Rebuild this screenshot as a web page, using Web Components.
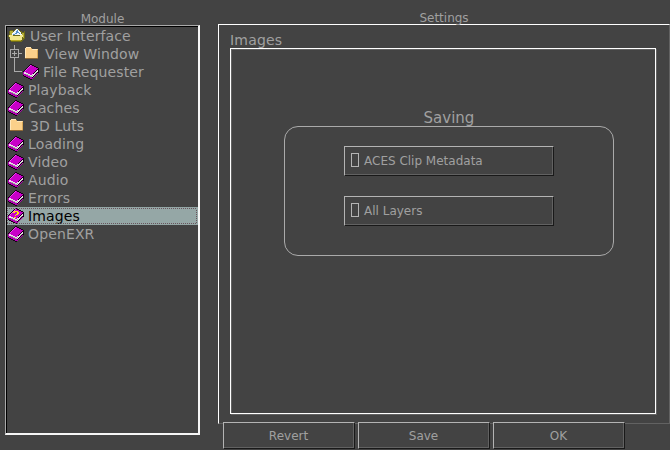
<!DOCTYPE html>
<html lang="en"><head><meta charset="utf-8"><title>Settings</title>
<style>
html,body{margin:0;width:670px;height:450px;overflow:hidden;background:#434343}
</style></head><body>
<prefs-window></prefs-window>
<script>
const define=(name,html,setup)=>customElements.define(name,class extends HTMLElement{
  connectedCallback(){
    if(this.shadowRoot)return;
    this.attachShadow({mode:'open'}).innerHTML=html;
    if(setup)setup(this,this.shadowRoot);
  }
});

const bookArt=`<path d="M7 0h2v1h2v1h2v1h2v1h1v5h-1v1h-1v1h-1v1h-1v1h-1v1h-1v1h-1v1H7v-1H5v-1H3v-1H1v-1H0V7h1V6h1V5h1V4h1V3h1V2h1V1h1z" fill="#160016"/>
<path d="M7 1h2v1h2v1h2v1h2v1h-1v1h-1v1h-1v1h-1v1h-1v1H9v1H7v-1H5V9H3V8H1V7h1V6h1V5h1V4h1V3h1V2h1z" fill="#c800c8"/>
<path d="M1 8h2v1h2v1h2v1h2v-1h2V9h1V8h1V7h1V6h1v2h-1v1h-1v1h-1v1h-1v1h-1v1H9v1H7v-1H5v-1H3v-1H1z" fill="#eadfea"/>
<path d="M3 10h2v1h2v1h2v-1h1v1H9v1H7v-1H5v-1H3zM12 9h1V8h1v1h-1v1h-1z" fill="#aaa"/>
<path d="M0 8h1v2h2v1h2v1h2v1h2v1h1v1H7v-1H5v-1H3v-1H1v-1H0zM10 13h1v-1h1v-1h1v-1h1V9h1v1h-1v1h-1v1h-1v1h-1v1h-1z" fill="#b000b0"/>
<path d="M7 1h1v1H7v1H6v1H5v1H4v1H3v1H2V6h1V5h1V4h1V3h1V2h1z" fill="#ee48ee"/>`;
const art={
 book:bookArt,
 help:bookArt+`<path d="M6 3h4v1h1v2h-1v1H8v1H7V7h1V6h1V4H7v1H5V4h1zM6 9h2v1H6z" fill="#ffe800"/>`,
 folder:`<path d="M2 2h1V1h5v1h1v1h6v10H2z" fill="#fbd08a"/><path d="M2 2h1V1h5v1H3v10H2zM9 3h5v1H9z" fill="#ffe8bb"/><path d="M8 2h1v1H8zM14 4h1v8h-1z" fill="#d8a858"/><path d="M2 12h13v1H2z" fill="#8f6936"/>`,
 open:`<path d="M1 3h1V2h3v1h1V2h1V1h4v1h1v1h2v1h2V3h1v8h-1v1h-1v1h-1v1H3v-1H2v-2H1V9H0V7h1z" fill="#6c6919"/>
 <path d="M2 3h3v1h2v3H2zM14 5h2v5h-1V8h-2V6h1z" fill="#b3ac34"/>
 <path d="M8 1h2v1h1v1h1v1h1v2h1v1H4V5h1V4h1V3h1V2h1z" fill="#eef5fb"/>
 <path d="M8 3h1V2h1v2h1v1H9v1H7V5h1zM11 5h1v1h-1zM5 6h2v1H5z" fill="#5590cc"/>
 <path d="M1 7h4v1h7V7h3v2h-1v3h-1v1H3v-1H2V9H1z" fill="#f2e88e"/>
 <path d="M3 12h10v1H3z" fill="#b9aa20"/>`
};
define('tree-icon',`<style>:host{display:block;width:18px;height:16px;flex:none}svg{display:block}</style><svg width="18" height="16" shape-rendering="crispEdges"></svg>`,
 (h,r)=>{r.querySelector('svg').innerHTML=art[h.getAttribute('kind')]});

define('tree-row',`<style>
:host{display:flex;box-sizing:border-box;height:18px;align-items:center;position:relative;padding-left:var(--indent,1px);font:14px/18px "DejaVu Sans",sans-serif;letter-spacing:.13px;color:#a0a0a0;white-space:pre}
:host([selected]){background:#95a7a6;color:#000}
.focus,.branch{position:absolute;left:0;top:0;pointer-events:none}
.text{margin-left:var(--gap,4px)}
</style><svg class="branch" width="20" height="18" shape-rendering="crispEdges" fill="none" stroke="#aaa"></svg><slot name="icon"></slot><span class="text"><slot></slot></span><svg class="focus" width="191" height="18" shape-rendering="crispEdges"></svg>`,
 (h,r)=>{
  const kind=h.getAttribute('icon'),i=document.createElement('tree-icon');
  i.setAttribute('kind',kind);i.slot='icon';h.append(i);
  const b=r.querySelector('.branch'),branch=h.getAttribute('branch');
  if(kind==='book'||kind==='help')h.style.setProperty('--gap','2px');
  if(branch==='plus')b.innerHTML='<path d="M3.5 4.5h8v8h-8zM5 8.5h5M7.5 6v5M7.5 0v4M7.5 13v5M12 8.5h3"/>';
  if(branch==='end')b.innerHTML='<path d="M7.5 0v8.5H15"/>';
  if(h.hasAttribute('selected'))r.querySelector('.focus').innerHTML='<path d="M0 1.5h190M0 16.5h190M.5 3v13M189.5 3v13" fill="none" stroke="#68545c" stroke-dasharray="1 1"/>';
 });

define('push-button',`<style>
:host{display:flex;box-sizing:border-box;width:132px;height:27px;border:1px solid;border-color:#b4b4b4 #191919 #191919 #b4b4b4;box-shadow:inset -1px -1px #626262;background:#434343;color:#a0a0a0;font:12px/27px "DejaVu Sans",sans-serif;justify-content:center;padding-right:1px}
</style><slot></slot>`);
define('check-option',`<style>
:host{display:flex;box-sizing:border-box;width:210px;height:30px;border:1px solid;border-color:#b4b4b4 #191919 #191919 #b4b4b4;box-shadow:inset -1px -1px #626262;padding-left:6px;color:#a0a0a0;font:12px/28px "DejaVu Sans",sans-serif}
i{box-sizing:border-box;width:8px;height:14px;border:1px solid #b4b4b4;margin:6px 5px 0 0}
</style><i></i><slot></slot>`);
define('option-group',`<style>
:host{display:block;width:330px}
h2{margin:0;height:18px;font:15px/20px "DejaVu Sans",sans-serif;text-align:center;color:#a0a0a0}
div{box-sizing:border-box;height:130px;border:1px solid #aaa;border-radius:14px;display:flex;flex-direction:column;gap:20px;padding:19px 0 0 59px}
</style><h2></h2><div><slot></slot></div>`,(h,r)=>{r.querySelector('h2').textContent=h.getAttribute('label')});

define('settings-page',`<style>
:host{display:block;width:427px}
h3{margin:0;height:17px;font:14px/19px "DejaVu Sans",sans-serif;letter-spacing:.2px;color:#a0a0a0}
div{box-sizing:border-box;height:366px;width:426px;border:1px solid #fff;box-shadow:1px 1px #626262,inset 1px 1px #626262;padding:59px 0 0 53px}
</style><h3>Images</h3><div><slot></slot></div>`);

define('module-list',`<style>
:host{display:block;width:195px}
h1{margin:0;height:14px;font:12px/16px "DejaVu Sans",sans-serif;text-align:center;color:#a0a0a0}
div{box-sizing:border-box;height:410px;border:solid;border-width:1px 2px 2px 1px;border-color:#aaa #f6f6f6 #f6f6f6 #aaa;box-shadow:inset 1px 1px #000;padding:1px 0 0 1px}
</style><h1>Module</h1><div><slot></slot></div>`);

define('prefs-window',`<style>
:host{display:grid;grid-template-columns:195px 452px;column-gap:18px;box-sizing:border-box;width:670px;height:450px;padding:11px 0 0 5px;background:#434343}
h1{margin:0;height:13px;font:12px/14px "DejaVu Sans",sans-serif;text-align:center;color:#a0a0a0}
.frame{box-sizing:border-box;height:400px;border:1px solid;border-color:#fff #626262 #626262 #fff;padding:6px 0 0 11px}
.actions{display:flex;gap:3px;margin:-2px 0 0 5px;position:relative}
</style>
<module-list>
<tree-row icon="open">User Interface</tree-row>
<tree-row icon="folder" branch="plus" style="--indent:16px">View Window</tree-row>
<tree-row icon="book" branch="end" style="--indent:16px">File Requester</tree-row>
<tree-row icon="book">Playback</tree-row>
<tree-row icon="book">Caches</tree-row>
<tree-row icon="folder">3D Luts</tree-row>
<tree-row icon="book">Loading</tree-row>
<tree-row icon="book">Video</tree-row>
<tree-row icon="book">Audio</tree-row>
<tree-row icon="book">Errors</tree-row>
<tree-row icon="help" selected>Images</tree-row>
<tree-row icon="book">OpenEXR</tree-row>
</module-list>
<main><h1>Settings</h1><section class="frame"><settings-page><option-group label="Saving"><check-option>ACES Clip Metadata</check-option><check-option>All Layers</check-option></option-group></settings-page></section>
<div class="actions"><push-button>Revert</push-button><push-button>Save</push-button><push-button>OK</push-button></div></main>`);
</script></body></html>
